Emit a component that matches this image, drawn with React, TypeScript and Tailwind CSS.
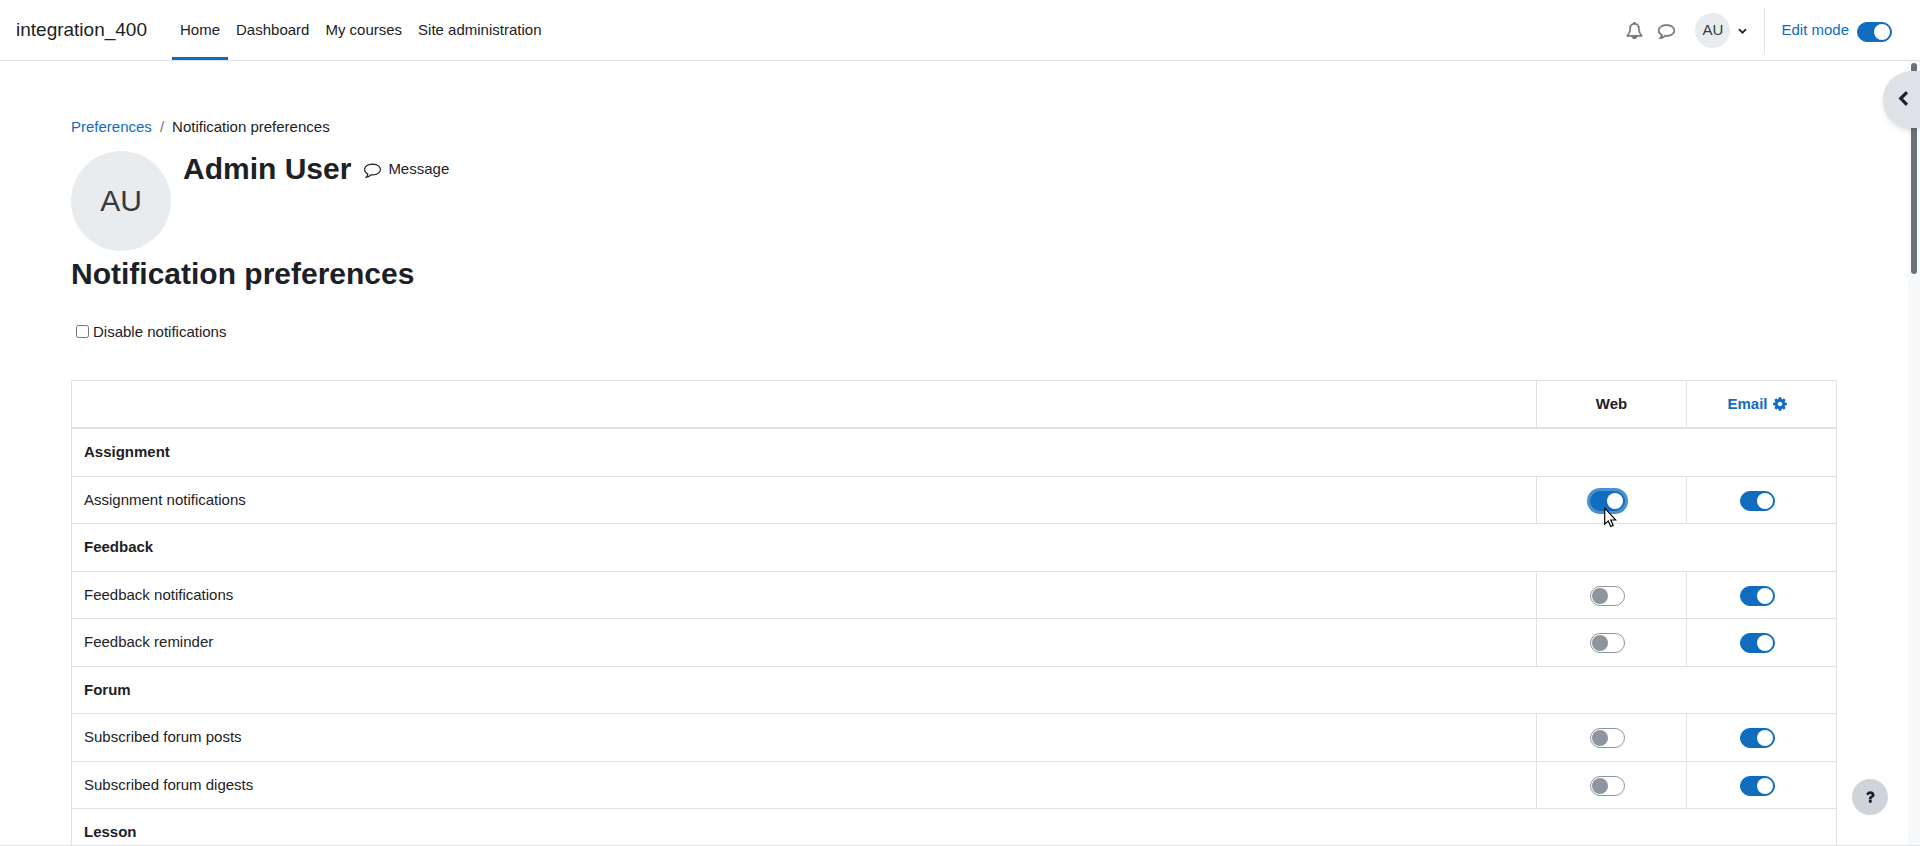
import { Fragment, useState } from "react";

const ICONS = {
  bell: "M912 1696q0-16-16-16-59 0-101.500-42.500t-42.500-101.500q0-16-16-16t-16 16q0 73 51.500 124.500t124.500 51.500q16 0 16-16zm-666-288h1300q-266-300-266-832 0-51-24-105t-69-103-121.500-80.500-169.500-31.500-169.500 31.500-121.500 80.500-69 103-24 105q0 532-266 832zm1482 0q0 52-38 90t-90 38h-448q0 106-75 181t-181 75-181-75-75-181h-448q-52 0-90-38t-38-90q50-42 91-88t85-119.500 74.500-158.500 50-206 19.500-260q0-152 117-282.500t307-158.500q-8-19-8-39 0-40 28-68t68-28 68 28 28 68q0 20-8 39 190 28 307 158.500t117 282.500q0 139 19.500 260t50 206 74.500 158.500 85 119.500 91 88z",
  comment: "M896 384q-204 0-381.500 69.500t-282 187.500-104.500 255q0 112 71.500 213.500t201.500 175.500l87 50-27 96q-24 91-70 172 152-63 275-171l43-38 57 6q69 8 130 8 204 0 381.500-69.500t282-187.500 104.500-255-104.500-255-282-187.500-381.500-69.500zm896 512q0 174-120 321.500t-326 233-450 85.500q-70 0-145-8-198 175-460 242-49 14-114 22h-5q-15 0-27-10.500t-16-27.500v-1q-3-4-.5-12t2-10 4.500-9.500l6-9 7-8.500 8-9q7-8 31-34.500t34.500-38 31-39.500 32.500-51 27-59 26-76q-157-89-247.500-220t-90.500-281q0-174 120-321.500t326-233 450-85.500 450 85.500 326 233 120 321.500z",
  cog: "M1152 896q0-106-75-181t-181-75-181 75-75 181 75 181 181 75 181-75 75-181zm512-109v222q0 12-8 23t-20 13l-185 28q-19 54-39 91 35 50 107 138 10 12 10 25t-9 23q-27 37-99 108t-94 71q-12 0-26-9l-138-108q-44 23-91 38-16 136-29 186-7 28-36 28h-222q-14 0-24.500-8.500t-11.500-21.500l-28-184q-49-16-90-37l-141 107q-10 9-25 9-14 0-25-11-126-114-165-168-7-10-7-23 0-12 8-23 15-21 51-66.500t54-70.500q-27-50-41-99l-183-27q-13-2-21-12.500t-8-23.500v-222q0-12 8-23t19-13l186-28q14-46 39-92-40-57-107-138-10-12-10-24 0-10 9-23 26-36 98.500-107.500t94.500-71.500q13 0 26 10l138 107q44-23 91-38 16-136 29-186 7-28 36-28h222q14 0 24.500 8.500t11.500 21.500l28 184q49 16 90 37l142-107q9-9 24-9 13 0 25 10 129 119 165 170 7 8 7 22 0 12-8 23-15 21-51 66.500t-54 70.500q26 50 41 98l183 28q13 2 21 12.500t8 23.500z",
  chevronLeft: "M1427 301l-531 531 531 531q19 19 19 45t-19 45l-166 166q-19 19-45 19t-45-19l-742-742q-19-19-19-45t19-45l742-742q19-19 45-19t45 19l166 166q19 19 19 45t-19 45z",
  chevronDown: "M1683 808l-742 741q-19 19-45 19t-45-19l-742-741q-19-19-19-45.500t19-45.500l166-165q19-19 45-19t45 19l531 531 531-531q19-19 45-19t45 19l166 165q19 19 19 45.500t-19 45.500z",
  question: "M1088 1256v240q0 16-12 28t-28 12h-240q-16 0-28-12t-12-28v-240q0-16 12-28t28-12h240q16 0 28 12t12 28zm316-600q0 54-15.500 101t-35 76.500-55 59.500-57.500 43.500-61 35.500q-41 23-68.500 65t-27.500 67q0 17-12 32.500t-28 15.500h-240q-15 0-25.500-18.500t-10.500-37.500v-45q0-83 65-156.500t143-108.500q59-27 84-56t25-76q0-42-46.500-74t-107.500-32q-65 0-108 29-35 25-107 115-13 16-31 16-12 0-25-8l-164-125q-13-10-15.500-25t5.500-28q160-266 464-266 80 0 161 31t146 83 106 127.500 41 158.500z",
};

function Icon({ name, className }: { name: keyof typeof ICONS; className?: string }) {
  return (
    <svg viewBox="0 0 1792 1792" fill="currentColor" aria-hidden="true" className={className}>
      <path d={ICONS[name]} />
    </svg>
  );
}

const NAV = ["Home", "Dashboard", "My courses", "Site administration"];

const GROUPS = [
  { name: "Assignment", rows: [{ name: "Assignment notifications", web: true, email: true }] },
  {
    name: "Feedback",
    rows: [
      { name: "Feedback notifications", web: false, email: true },
      { name: "Feedback reminder", web: false, email: true },
    ],
  },
  {
    name: "Forum",
    rows: [
      { name: "Subscribed forum posts", web: false, email: true },
      { name: "Subscribed forum digests", web: false, email: true },
    ],
  },
  { name: "Lesson", rows: [] },
];

function Switch({ label, on, focused, id }: { label: string; on: boolean; focused?: boolean; id?: string }) {
  const [checked, setChecked] = useState(on);
  return (
    <span className="relative inline-flex h-5 w-[35px] shrink-0">
      <input
        id={id}
        type="checkbox"
        role="switch"
        aria-label={label}
        checked={checked}
        onChange={e => setChecked(e.target.checked)}
        className={
          "peer h-5 w-[35px] appearance-none rounded-full border border-[#8f959e] bg-white checked:border-[#0f6cbf] checked:bg-[#0f6cbf] cursor-pointer focus:outline-none focus:ring-3 focus:ring-[#0f6cbf]/75" +
          (focused ? " ring-3 ring-[#0f6cbf]/75" : "")
        }
      />
      <span className="pointer-events-none absolute left-0.5 top-0.5 size-4 rounded-full bg-[#8f959e] peer-checked:left-[17px] peer-checked:bg-white" />
    </span>
  );
}

function Navbar() {
  return (
    <header className="flex h-[61px] shrink-0 items-stretch border-b border-[#dee2e6] bg-white px-4">
      <a href="#" className="mr-[25px] flex items-center text-[19px]">integration_400</a>
      <nav className="flex">
        {NAV.map((item, i) => (
          <a
            key={item}
            href="#"
            className={"flex items-center border-y-3 border-t-transparent px-2 " + (i === 0 ? "border-b-[#0f6cbf]" : "border-b-transparent")}
          >
            {item}
          </a>
        ))}
      </nav>

      <div className="ml-auto flex items-center pr-3">
        <button aria-label="Notifications" className="mr-[15px] text-[#6a737b] cursor-pointer">
          <Icon name="bell" className="size-[17px] stroke-current stroke-[60]" />
        </button>
        <button aria-label="Messages" className="mr-5 text-[#6a737b] cursor-pointer">
          <Icon name="comment" className="size-[17px] stroke-current stroke-[60]" />
        </button>
        <button aria-label="User menu" className="mr-[17px] flex items-center gap-2 cursor-pointer">
          <span className="flex size-[35px] items-center justify-center rounded-full bg-[#e9ecef] text-[#343a40]">AU</span>
          <Icon name="chevronDown" className="size-[9px]" />
        </button>
        <div className="flex h-[45px] items-center gap-2 border-l border-[#dee2e6] pl-4">
          <label htmlFor="edit-mode" className="text-[#0f6cbf]">Edit mode</label>
          <span className="flex pt-1">
            <Switch id="edit-mode" label="Edit mode" on />
          </span>
        </div>
      </div>
    </header>
  );
}

function PreferencesTable() {
  const cellCls = "border border-[#dee2e6] p-3";
  return (
    <table className="w-full border-collapse border border-[#dee2e6]">
      <thead>
        <tr>
          <th className={cellCls + " border-b-2"} aria-label="Notification" />
          <th className={cellCls + " w-[150px] border-b-2 text-center font-bold"}>Web</th>
          <th className={cellCls + " w-[150px] border-b-2 text-center font-bold"}>
            <a href="#" className="mr-2 inline-flex items-center gap-1 text-[#0f6cbf]">
              Email
              <Icon name="cog" className="size-4" />
            </a>
          </th>
        </tr>
      </thead>
      <tbody>
        {GROUPS.map(group => (
          <Fragment key={group.name}>
            <tr>
              <th colSpan={3} className={cellCls + " text-left font-bold"}>{group.name}</th>
            </tr>
            {group.rows.map(row => (
              <tr key={row.name}>
                <td className={cellCls}>{row.name}</td>
                <td className={cellCls + " py-0 text-center"}>
                  <span className="relative mr-2 inline-flex align-middle">
                    <Switch label={row.name + " web"} on={row.web} focused={row.web} />
                    {row.web && <Cursor />}
                  </span>
                </td>
                <td className={cellCls + " py-0 text-center"}>
                  <span className="mr-2 inline-flex align-middle">
                    <Switch label={row.name + " email"} on={row.email} />
                  </span>
                </td>
              </tr>
            ))}
          </Fragment>
        ))}
      </tbody>
    </table>
  );
}

function Cursor() {
  return (
    <svg viewBox="0 0 13 21" aria-hidden="true" className="pointer-events-none absolute left-3.5 top-4 h-[21px] w-[13px]">
      <path d="M.7 1.2v16l3.600-3.300 2.400 5.600 2.500-1.100-2.400-5.400h5z" fill="#fff" stroke="#000" strokeWidth="1.200" />
    </svg>
  );
}

export default function App() {
  return (
    <div className="flex h-screen flex-col overflow-hidden border-b border-[#dee2e6] bg-white font-['Liberation_Sans',Arial,sans-serif] text-[15px] leading-normal text-[#1d2125]">
      <Navbar />

      <div className="relative flex min-h-0 flex-1">
        <main className="min-w-0 flex-1 overflow-hidden px-[71px] pt-[55px]">
          <nav aria-label="Breadcrumb" className="flex gap-2">
            <a href="#" className="text-[#0f6cbf]">Preferences</a>
            <span className="text-[#6a737b]">/</span>
            <span>Notification preferences</span>
          </nav>

          <div className="mt-3 flex items-start gap-3">
            <div className="flex size-[100px] items-center justify-center rounded-full bg-[#e9ecef] text-3xl text-[#343a40]">AU</div>
            <h1 className="text-3xl font-bold">Admin User</h1>
            <button className="flex h-[37px] items-center gap-[7px] pl-px cursor-pointer">
              <Icon name="comment" className="size-[17px]" />
              Message
            </button>
          </div>

          <h2 className="mt-[5px] text-3xl font-bold">Notification preferences</h2>

          <div className="mb-[37px] mt-[29px] flex items-center gap-1 pl-[5px] leading-[22px]">
            <input id="disable-all" type="checkbox" className="size-[13px]" />
            <label htmlFor="disable-all">Disable notifications</label>
          </div>

          <PreferencesTable />
        </main>

        <div aria-hidden="true" className="w-3 shrink-0 bg-[#f8f9fa] px-[3px] pt-0.5">
          <div className="h-[211px] rounded-full bg-[#6a737b]" />
        </div>

        <button
          aria-label="Open block drawer"
          className="absolute right-0 top-2.5 flex h-[57px] w-[37px] items-center rounded-l-full bg-[#dee2e6] pb-0.5 pl-3 shadow-md cursor-pointer"
        >
          <Icon name="chevronLeft" className="size-4" />
        </button>
        <button
          aria-label="Help"
          className="absolute bottom-[30px] right-8 flex size-9 items-center justify-center rounded-full bg-[#ced4da] cursor-pointer"
        >
          <Icon name="question" className="size-4" />
        </button>
      </div>
    </div>
  );
}
